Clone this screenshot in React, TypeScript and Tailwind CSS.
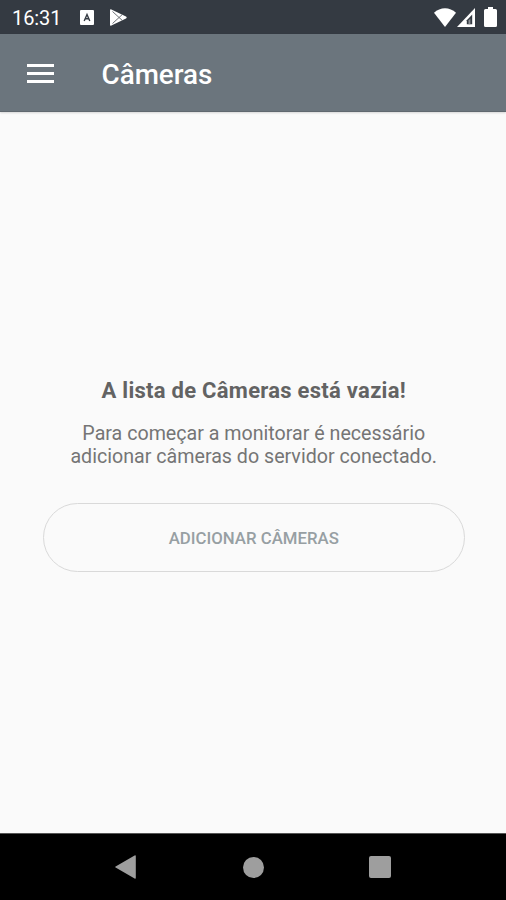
const StatusBar = () => (
    <div className="flex h-[34px] items-center justify-between bg-[#343a42] pr-[9px] pl-3 text-white">
        <div className="flex items-center">
            <span className="w-[68px] pt-px text-[20px] leading-none tracking-[-0.1px]">16:31</span>
            <svg className="h-[15px] w-[14px]" viewBox="0 0 14 15">
                <rect width="14" height="15" rx="1" fill="#fff" />
                <path d="M4.2 11 7 4.5 9.8 11M5 8.8h4" fill="none" stroke="#343a42" strokeWidth="1.4" />
            </svg>
            <svg className="ml-4 h-[17px] w-[17px]" viewBox="0 0 17 17">
                <path d="M0 1.2Q0-.2 1.4.4L16 7.6q1.4.9 0 1.8L1.4 16.6Q0 17.2 0 15.8Z" fill="#fff" />
                <path d="M2.5 2.5 12 11.2M2.5 14.5 12 5.8" fill="none" stroke="#5d6268" strokeWidth="0.9" />
            </svg>
        </div>
        <div className="flex items-center">
            <svg className="h-[19px] w-[22px]" viewBox="0 0 22 19" fill="#fff">
                <path d="M0 4.8C6.2-1.4 15.8-1.4 22 4.8L11 19Z" />
            </svg>
            <svg className="ml-px h-[19px] w-[18px]" viewBox="0 0 18 19">
                <path d="M18 0v19H0Z" fill="#fff" />
                <path d="M15.2 6.5v9.8H9.8v-4Z" fill="#343a42" />
                <path d="M11.5 12.4 13.4 10.600v5.700h-1.900Z" fill="#8b8f94" />
            </svg>
            <svg className="ml-[9px] h-5 w-[13px]" viewBox="0 0 13 20" fill="#fff">
                <path d="M4 0h5v2h2.5A1.5 1.5 0 0 1 13 3.5v15a1.5 1.5 0 0 1-1.5 1.5h-10A1.5 1.5 0 0 1 0 18.5v-15A1.5 1.5 0 0 1 1.5 2H4Z" />
            </svg>
        </div>
    </div>
);

const AppBar = () => (
    <header className="flex h-[78px] items-center border-b border-[#60686f] bg-[#6b757d] pl-[26.5px] shadow-[0_1px_2px_rgba(0,0,0,0.15)]">
        <button type="button" aria-label="Menu" className="mt-0.5 mr-12 flex w-[27px] flex-col gap-[5px]">
            <span className="h-[3px] bg-white" />
            <span className="h-[3px] bg-white" />
            <span className="h-[3px] bg-white" />
        </button>
        <h1 className="pt-1 text-[27.8px] leading-none font-medium text-white">Câmeras</h1>
    </header>
);

const NavigationBar = () => (
    <nav className="flex h-[67px] items-center border-t border-[#555] bg-black pl-[115px]">
        <svg className="h-6 w-[21px]" viewBox="0 0 21 24" fill="#9e9e9e">
            <path d="M.6 11.4 19.6.4q1.2-.6 1.2.8v21.6q0 1.4-1.2.8L.6 12.6q-.9-.6 0-1.2Z" />
        </svg>
        <span className="ml-[107px] size-[21px] rounded-full bg-[#9e9e9e]" />
        <span className="ml-[105px] size-[22px] rounded-[2px] bg-[#9e9e9e]" />
    </nav>
);

export default function App() {
    return (
        <div className="flex h-[900px] w-[506px] flex-col overflow-hidden bg-[#fafafa] font-[Roboto,sans-serif]">
            <StatusBar />
            <AppBar />
            <main className="flex flex-1 flex-col pt-[266px] pr-[41px] pl-[42.5px] text-center">
                <h2 className="text-[22px] leading-[26px] font-bold tracking-[0.27px] text-[#636363]">
                    A lista de Câmeras está vazia!
                </h2>
                <p className="mt-[18px] text-[19.65px] leading-[23px] text-[#757575]">
                    Para começar a monitorar é necessário
                    <br />
                    adicionar câmeras do servidor conectado.
                </p>
                <button
                    type="button"
                    className="mt-[35px] h-[69px] rounded-full border border-[#d9d9d9] pt-0.5 text-[16.8px] font-medium text-[#979fa3]"
                >
                    ADICIONAR CÂMERAS
                </button>
            </main>
            <NavigationBar />
        </div>
    );
}
